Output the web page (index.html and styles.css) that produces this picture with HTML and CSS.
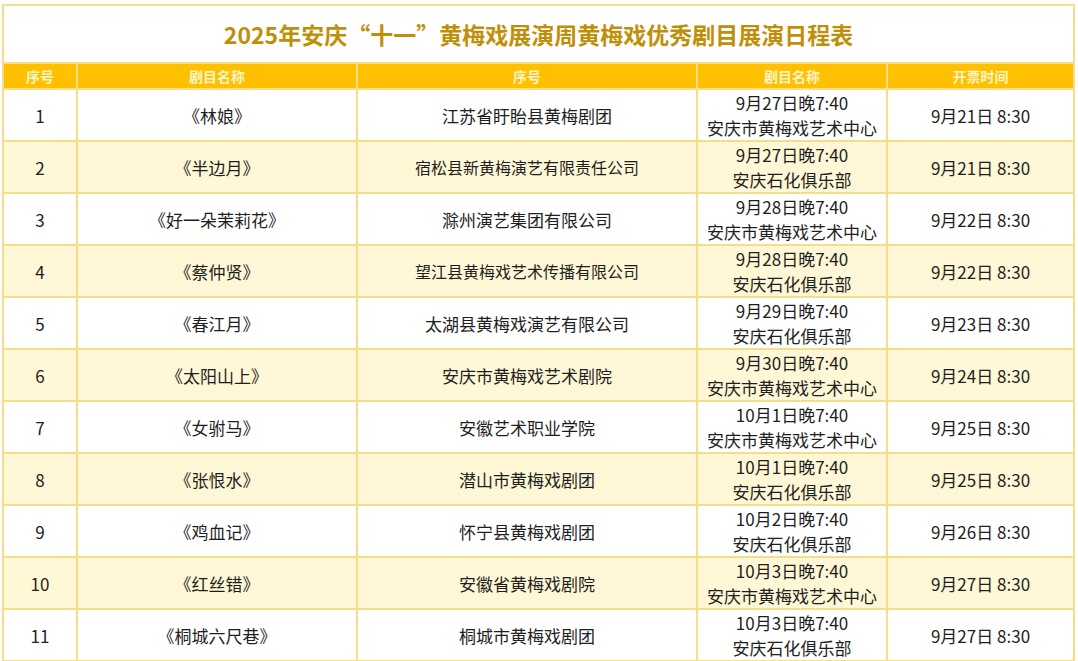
FILE: index.html
```html
<!DOCTYPE html>
<html lang="zh-CN">
<head>
<meta charset="utf-8">
<title>日程表</title>
<link rel="stylesheet" href="styles.css">
</head>
<body>
<div class="sheet">
  <div class="title">2025年安庆“十一”黄梅戏展演周黄梅戏优秀剧目展演日程表</div>
  <div class="hd">序号</div><div class="hd">剧目名称</div><div class="hd">序号</div><div class="hd">剧目名称</div><div class="hd">开票时间</div>

  <div class="c">1</div><div class="c">《林娘》</div><div class="c">江苏省盱眙县黄梅剧团</div><div class="c two">9月27日晚7:40<br>安庆市黄梅戏艺术中心</div><div class="c">9月21日 8:30</div>

  <div class="c alt">2</div><div class="c alt">《半边月》</div><div class="c alt shrink">宿松县新黄梅演艺有限责任公司</div><div class="c alt two">9月27日晚7:40<br>安庆石化俱乐部</div><div class="c alt">9月21日 8:30</div>

  <div class="c">3</div><div class="c">《好一朵茉莉花》</div><div class="c">滁州演艺集团有限公司</div><div class="c two">9月28日晚7:40<br>安庆市黄梅戏艺术中心</div><div class="c">9月22日 8:30</div>

  <div class="c alt">4</div><div class="c alt">《蔡仲贤》</div><div class="c alt shrink">望江县黄梅戏艺术传播有限公司</div><div class="c alt two">9月28日晚7:40<br>安庆石化俱乐部</div><div class="c alt">9月22日 8:30</div>

  <div class="c">5</div><div class="c">《春江月》</div><div class="c">太湖县黄梅戏演艺有限公司</div><div class="c two">9月29日晚7:40<br>安庆石化俱乐部</div><div class="c">9月23日 8:30</div>

  <div class="c alt">6</div><div class="c alt">《太阳山上》</div><div class="c alt">安庆市黄梅戏艺术剧院</div><div class="c alt two">9月30日晚7:40<br>安庆市黄梅戏艺术中心</div><div class="c alt">9月24日 8:30</div>

  <div class="c">7</div><div class="c">《女驸马》</div><div class="c">安徽艺术职业学院</div><div class="c two">10月1日晚7:40<br>安庆市黄梅戏艺术中心</div><div class="c">9月25日 8:30</div>

  <div class="c alt">8</div><div class="c alt">《张恨水》</div><div class="c alt">潜山市黄梅戏剧团</div><div class="c alt two">10月1日晚7:40<br>安庆石化俱乐部</div><div class="c alt">9月25日 8:30</div>

  <div class="c">9</div><div class="c">《鸡血记》</div><div class="c">怀宁县黄梅戏剧团</div><div class="c two">10月2日晚7:40<br>安庆石化俱乐部</div><div class="c">9月26日 8:30</div>

  <div class="c alt">10</div><div class="c alt">《红丝错》</div><div class="c alt">安徽省黄梅戏剧院</div><div class="c alt two">10月3日晚7:40<br>安庆市黄梅戏艺术中心</div><div class="c alt">9月27日 8:30</div>

  <div class="c">11</div><div class="c">《桐城六尺巷》</div><div class="c">桐城市黄梅戏剧团</div><div class="c two">10月3日晚7:40<br>安庆石化俱乐部</div><div class="c">9月27日 8:30</div>
</div>
</body>
</html>
```

FILE: styles.css
```css
html, body {
  margin: 0;
  padding: 0;
  background: #ffffff;
}
body {
  padding: 4px 0 0 2px;
  font-family: "Noto Sans CJK SC", "Noto Sans", sans-serif;
  color: #1e1e1e;
  overflow: hidden;
}
.sheet {
  display: grid;
  grid-template-columns: 72px 278px 338px 188px 185px;
  grid-template-rows: 56px 24px repeat(11, 50px);
  gap: 2px;
  padding: 2px;
  width: max-content;
  background: #f6de88;
}
.title {
  grid-column: 1 / -1;
  background: #ffffff;
  display: flex;
  align-items: center;
  justify-content: center;
  font-size: 23px;
  font-weight: 700;
  color: #bf8f0a;
}
.hd {
  background: #ffc000;
  color: #fff4c6;
  font-size: 14px;
  font-weight: 700;
  display: flex;
  align-items: center;
  justify-content: center;
}
.c {
  background: #ffffff;
  display: flex;
  align-items: center;
  justify-content: center;
  text-align: center;
  font-size: 17px;
  line-height: 25px;
  white-space: nowrap;
}
.c.alt {
  background: #fff7d6;
}
.c.shrink {
  font-size: 16px;
}
```
